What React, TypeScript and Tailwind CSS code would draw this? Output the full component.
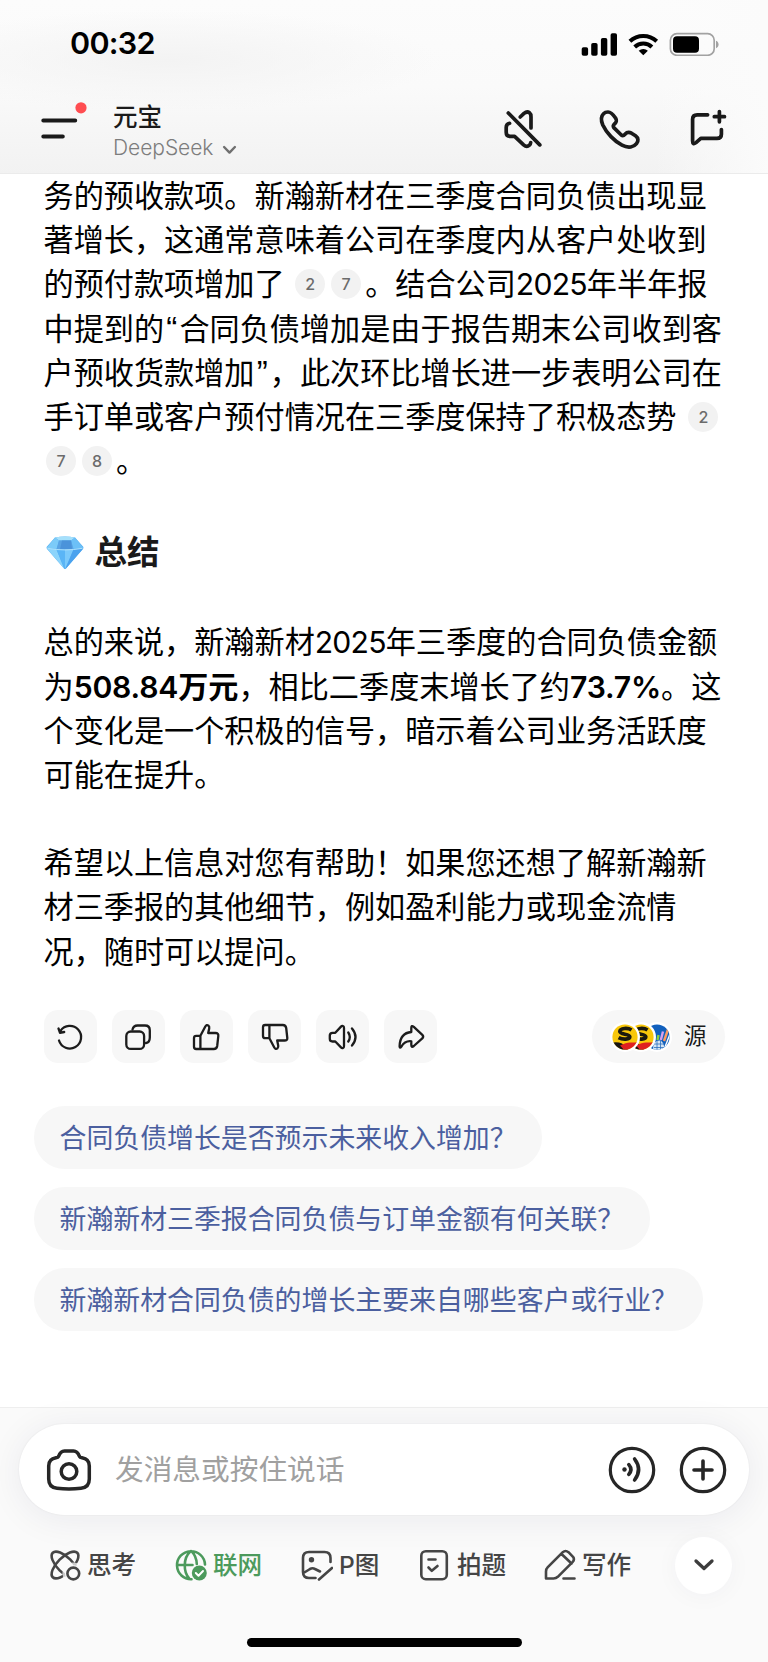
import React from "react";

const FONT = "font-['Inter','Noto_Sans_CJK_SC',sans-serif]";

function Line({ children }: { children: React.ReactNode }) {
  return <div className="h-[44.2px] leading-[44.2px] whitespace-nowrap">{children}</div>;
}

function Num({ children }: { children: React.ReactNode }) {
  return <span className="tracking-[-0.8px]">{children}</span>;
}

function Strong({ children }: { children: React.ReactNode }) {
  return <b className="font-semibold tracking-[-0.2px]">{children}</b>;
}

function Quote({ children }: { children: React.ReactNode }) {
  return (
    <span className="inline-block w-[15.3px] text-center font-['Liberation_Sans',sans-serif] text-[33px] leading-none">{children}</span>
  );
}

function Cite({ n, className = "" }: { n: number; className?: string }) {
  return (
    <span
      className={`inline-flex h-[30px] w-[30px] items-center justify-center rounded-full bg-[#f2f2f2] align-[5px] text-[16px] leading-none font-medium tracking-normal text-[#6b6b6b] ${className}`}
    >
      {n}
    </span>
  );
}

function StatusBar() {
  return (
    <div className="flex h-[86px] items-center justify-between pr-[49px] pl-[70px]">
      <span className="text-[30.5px] leading-none font-semibold tracking-[-0.7px] text-black">00:32</span>
      <svg width="138" height="24" viewBox="581 31 138 24" className="mt-[1px]">
        <g fill="#000">
          <rect x="581.7" y="46.3" width="6.4" height="8.4" rx="1.8" />
          <rect x="591.2" y="42" width="6.4" height="12.7" rx="1.8" />
          <rect x="600.9" y="37" width="6.4" height="17.7" rx="1.8" />
          <rect x="610.6" y="32.3" width="6.4" height="22.4" rx="1.8" />
          <path d="M643.3 54.3l-4.6-4.6a6.8 6.8 0 0 1 9.2 0z" />
        </g>
        <g fill="none" stroke="#000" strokeWidth="4">
          <path d="M634.7 46a12.4 12.4 0 0 1 17.2 0" />
          <path d="M629.9 40.2a19.6 19.6 0 0 1 26.8 0" />
        </g>
        <rect x="670.4" y="32.7" width="43.8" height="21.6" rx="6.6" fill="none" stroke="#a2a2a2" strokeWidth="1.7" />
        <rect x="673" y="35.3" width="26" height="16.4" rx="4" fill="#000" />
        <path d="M716 39.8c3.4 1.2 3.4 6.2 0 7.4z" fill="#a2a2a2" />
      </svg>
    </div>
  );
}

function NavBar() {
  return (
    <div className="flex h-[88px] items-start">
      <svg width="113" height="64" viewBox="0 86 113 64" fill="none" strokeLinecap="round">
        <path d="M43.3 120.4H75.2M43.3 136.5H62.8" stroke="#1a1a1a" strokeWidth="4" />
        <circle cx="81" cy="107.8" r="5.6" fill="#ff4d51" />
      </svg>
      <div className="flex flex-col">
        <div className="mt-[15px] h-[33px] text-[24.5px] leading-[33px] font-medium text-[#1a1a1a]">元宝</div>
        <div className="mt-[1px] flex h-[26px] items-center text-[21px] leading-[26px] font-light text-[#7d7d7d]">
          <span className="tracking-[-0.05px]">DeepSeek</span>
          <svg width="15" height="10" viewBox="0 0 14 10" className="mt-[3px] ml-[9px]" fill="none" stroke="#6f6f6f" strokeWidth="2.4" strokeLinecap="round" strokeLinejoin="round">
            <path d="M1.600 2l5.400 5.600L12.400 2" />
          </svg>
        </div>
      </div>
      <svg width="230" height="50" viewBox="500 104 230 50" className="mt-[18px] mr-[38px] ml-auto" fill="none" stroke="#1a1a1a" strokeWidth="3.7" strokeLinecap="round" strokeLinejoin="round">
        <path d="M508.300 113L539.800 144.900" />
        <path d="M520.200 117L524 113.400Q527 111 529.500 112.700Q531 113.800 531 117V128" />
        <path d="M509.600 123.300Q506.200 124 506.200 127.600V132.200Q506.200 136.300 510.200 136.300H514.600L523.600 144.900Q526.800 147.600 529.400 145.200Q530.600 144 530.700 142.500" />
        <path d="M608 112C611.500 112 613.500 115 615.500 118C617 120.500 616.800 121.500 615 123.500C613 125.300 612.600 126 613.800 127.600L621.300 135C622.800 136.200 623.500 136 625 134.200C627 132 629 131.800 631.500 133.200L635.500 135.800C638.500 138 638.600 141 636.500 143.700C634 147 628.500 148.600 622 145.200C614.500 141.200 606.500 133 602.800 125C600.500 119.500 601.300 116 603.500 113.800C604.800 112.400 606.300 112 608 112Z" />
        <path d="M707.600 114.800H697.200Q692.600 114.800 692.600 119.200V141Q692.600 145.200 696 142.600L700.800 138.400H717Q721.400 138.400 721.400 134.200V129.600" />
        <path d="M719.400 111.600V121.800M714.300 116.700H724.500" />
      </svg>
    </div>
  );
}

function ActionButton({ children }: { children: React.ReactNode }) {
  return (
    <button className="flex h-[53.5px] w-[53.5px] items-center justify-center rounded-[14px] bg-[#f7f7f7]">
      <svg width="32" height="32" viewBox="0 0 32 32" fill="none" stroke="#1c1c1c" strokeWidth="2.3" strokeLinecap="round" strokeLinejoin="round">
        {children}
      </svg>
    </button>
  );
}

function SinaLogo() {
  return (
    <svg width="30" height="30" viewBox="0 0 30 30" className="shrink-0">
      <circle cx="15" cy="15" r="15" fill="#fff" />
      <clipPath id="coin">
        <circle cx="15" cy="15" r="12.600" />
      </clipPath>
      <g clipPath="url(#coin)">
        <rect width="30" height="30" fill="#f8c70a" />
        <path d="M0 21Q7 19.500 12 21.500L20 30H0z" fill="#171412" />
        <path d="M10 23.500Q17 20 21 20.500Q25 21 30 19V30H16z" fill="#df2020" />
        <path d="M21.500 8C18 5.600 10.200 6 9.800 9.400C9.600 12.800 19.800 11.600 19.800 14.800C19.800 17.800 12.500 17.800 8.600 15.600" fill="none" stroke="#1b1a0e" strokeWidth="3.700" />
      </g>
    </svg>
  );
}

function ChartLogo() {
  return (
    <svg width="30" height="30" viewBox="0 0 30 30" className="shrink-0">
      <circle cx="15" cy="15" r="15" fill="#fff" />
      <clipPath id="globe">
        <circle cx="15" cy="15" r="12.600" />
      </clipPath>
      <g clipPath="url(#globe)">
        <rect width="30" height="30" fill="#1160bd" />
        <path d="M11 28Q11 18 18 18.500Q23 20 22 30z" fill="#d6e5f5" />
        <path d="M12 22H22M12 25.500H22M15 19V29M18.500 19V29" stroke="#2b70bd" strokeWidth=".8" />
        <path d="M15.500 18L16.500 13" stroke="#8dd13c" strokeWidth="2.400" />
        <path d="M18.800 18L21 9.500" stroke="#d9a0ee" strokeWidth="2.400" />
        <path d="M22 19L26 7.500" stroke="#ff9a60" strokeWidth="2.400" />
        <path d="M23 25L28 12" stroke="#fff" strokeWidth="1.400" />
      </g>
    </svg>
  );
}

function Diamond() {
  return (
    <svg width="38" height="34" viewBox="0 0 38 34" className="shrink-0">
      <path d="M9 1.500Q19-.5 29 1.500L37 10.500Q38 12 36.500 13.500L20 32.500Q19 33.500 18 32.500L1.500 13.500Q0 12 1 10.500z" fill="#55aef2" />
      <path d="M9 1.500Q19-.5 29 1.500L25 4.500H13z" fill="#a5e0fb" />
      <path d="M9 1.500L13 4.500L10.500 13L.6 12z" fill="#7ccbf8" />
      <path d="M29 1.500L25 4.500L27.500 13L37.400 12z" fill="#6cc0f7" />
      <path d="M13 4.500H25L27.500 13.500H10.500z" fill="#5aa4e4" />
      <path d="M16 4.500H25L26 13.500H14z" fill="#4b93da" />
      <path d="M.8 12.500L10.500 13.500L18 32.500z" fill="#8cd4fb" />
      <path d="M10.500 13.500H19V33z" fill="#5ab5f6" />
      <path d="M19 13.500H27.500L19 33z" fill="#7ccaFb" />
      <path d="M27.500 13.500L37.200 12.500L19.500 33z" fill="#4ba2ee" />
      <path d="M1.500 12.300Q19 15.500 36.500 12.300" fill="none" stroke="#b8e6fd" strokeWidth=".9" />
    </svg>
  );
}

function Suggestion({ text, className }: { text: string; className: string }) {
  return (
    <button className={`flex h-[63px] items-center rounded-[31px] bg-[#f7f7f7] pt-[1px] pl-[25.5px] text-[26.9px] leading-none whitespace-nowrap text-[#4b5f9f] ${className}`}>
      <span>{text}</span>
    </button>
  );
}

function Chip({ label, icon, className = "" }: { label: string; icon: React.ReactNode; className?: string }) {
  return (
    <div className={`flex shrink-0 items-center text-[24.6px] leading-none font-medium whitespace-nowrap text-[#454545] ${className}`}>
      <svg width="32" height="32" viewBox="0 0 32 32" className="mr-[6px] shrink-0" fill="none" stroke="currentColor" strokeWidth="2.600" strokeLinecap="round" strokeLinejoin="round">
        {icon}
      </svg>
      <span>{label}</span>
    </div>
  );
}

export default function App() {
  return (
    <div className={`flex h-[1662px] w-[768px] flex-col overflow-hidden bg-white text-black ${FONT}`}>
      <header className="z-10 h-[174px] shrink-0 border-b border-[#ebebeb] bg-[#fafafa] bg-[radial-gradient(ellipse_at_22%_35%,#f3f3f3_0%,#f3f3f300_32%),linear-gradient(90deg,#fafafa00_85%,#fbfbfb_100%),linear-gradient(180deg,#fcfcfc_0%,#fafafa_50%,#f2f2f2_100%)]">
        <StatusBar />
        <NavBar />
      </header>

      <main className="flex min-h-0 flex-1 flex-col bg-white">
        <div className="pl-[43.5px] text-[30.15px]">
          <Line>务的预收款项。新瀚新材在三季度合同负债出现显</Line>
          <Line>著增长，这通常意味着公司在季度内从客户处收到</Line>
          <Line>
            的预付款项增加了
            <Cite n={2} className="ml-[10.5px]" />
            <Cite n={7} className="mr-[4px] ml-[6px]" />
            。结合公司<Num>2025</Num>年半年报
          </Line>
          <Line>中提到的<Quote>“</Quote>合同负债增加是由于报告期末公司收到客</Line>
          <Line>户预收货款增加<Quote>”</Quote>，此次环比增长进一步表明公司在</Line>
          <Line>
            手订单或客户预付情况在三季度保持了积极态势
            <Cite n={2} className="ml-[12px]" />
          </Line>
          <Line>
            <Cite n={7} className="ml-[2.5px]" />
            <Cite n={8} className="mr-[4px] ml-[6px]" />。
          </Line>
        </div>

        <h2 className="mt-[46px] flex h-[48px] items-center pl-[46px] text-[32.5px] leading-none font-bold text-[#1a1a1a]">
          <Diamond />
          <span className="ml-[10.5px]">总结</span>
        </h2>

        <div className="mt-[43px] pl-[43.5px] text-[30.15px]">
          <Line>总的来说，新瀚新材<Num>2025</Num>年三季度的合同负债金额</Line>
          <Line>
            为<Strong>508.84</Strong><b className="font-semibold">万元</b>，相比二季度末增长了约<Strong>73.7%</Strong>。这
          </Line>
          <Line>个变化是一个积极的信号，暗示着公司业务活跃度</Line>
          <Line>可能在提升。</Line>
        </div>

        <div className="mt-[44.2px] pl-[43.5px] text-[30.15px]">
          <Line>希望以上信息对您有帮助！如果您还想了解新瀚新</Line>
          <Line>材三季报的其他细节，例如盈利能力或现金流情</Line>
          <Line>况，随时可以提问。</Line>
        </div>

        <div className="mt-[36px] flex h-[53.5px] items-center justify-between pr-[43px] pl-[43.5px]">
          <div className="flex gap-[14.6px]">
            <ActionButton>
              <path d="M5 19.500A11.300 11.300 0 1 0 6.500 9.800M4.500 7.500L6 11.800L10.200 11" />
            </ActionButton>
            <ActionButton>
              <rect x="4.300" y="10.500" width="17.800" height="17.400" rx="4.500" />
              <path d="M10.500 8.500Q11.500 4.500 15.500 4.500H23Q27.800 4.500 27.800 9.300V16.500Q27.800 21.500 24 22" />
            </ActionButton>
            <ActionButton>
              <path d="M10.400 14.800V28H6.200Q4 28 4 25.800V17Q4 14.800 6.200 14.800H10.400L15.300 5.500Q16.600 3.300 18.400 4.600Q19.600 5.700 19.200 7.500L18.200 12H25.500Q28.600 12 28.300 15L27.200 25Q26.700 28 23.800 28H10.400" />
            </ActionButton>
            <ActionButton>
              <path d="M10.400 17.200V4H6.200Q4 4 4 6.200V15Q4 17.200 6.200 17.200H10.400L15.300 26.500Q16.600 28.700 18.400 27.400Q19.600 26.300 19.200 24.500L18.200 19.500H25.500Q28.600 19.500 28.300 17L27.200 7Q26.700 4 23.800 4H10.400" />
            </ActionButton>
            <ActionButton>
              <path d="M2.800 14.500Q2.800 11.800 5.500 11.800H8.300L14 5.600Q15 4.500 16 5Q17 5.400 17 7V25Q17 26.600 16 27Q15 27.500 14 26.400L8.300 20.500H5.500Q2.800 20.500 2.800 17.800zM21.300 11.500Q24.300 16 21.300 20.500M25 7.500Q32 16 25 24.500" />
            </ActionButton>
            <ActionButton>
              <path d="M16.300 11V7Q16.300 3.800 18.800 5.800L27.300 13.800Q29 15.600 27.300 17.400L18.800 25Q16.300 27 16.300 23.800V20.300Q10 19.500 6.200 25.800Q4.800 27.800 4.600 25.300Q5 12 16.300 11z" />
            </ActionButton>
          </div>
          <div className="flex h-[53.5px] w-[133px] items-center rounded-full bg-[#f7f7f7] pl-[18px]">
            <div className="z-30"><SinaLogo /></div>
            <div className="z-20 -ml-[14px]"><SinaLogo /></div>
            <div className="z-10 -ml-[14px]"><ChartLogo /></div>
            <span className="ml-[12px] text-[22.5px] leading-none text-[#1a1a1a]">源</span>
          </div>
        </div>

        <div className="mt-[43px] flex flex-col items-start gap-[18px] pl-[34px]">
          <Suggestion className="w-[508px]" text="合同负债增长是否预示未来收入增加？" />
          <Suggestion className="w-[616px]" text="新瀚新材三季报合同负债与订单金额有何关联？" />
          <Suggestion className="w-[669px]" text="新瀚新材合同负债的增长主要来自哪些客户或行业？" />
        </div>
      </main>

      <footer className="flex h-[255px] shrink-0 flex-col border-t border-[#eeeeee] bg-[#fafafa]">
        <div className="mx-[19px] mt-[16px] flex h-[91px] shrink-0 items-center rounded-[46px] bg-white pr-[22px] pl-[27px] shadow-[0_4px_36px_#20204012,0_0_2px_#00000012]">
          <svg width="46" height="42" viewBox="0 0 46 42" fill="none" stroke="#262626" strokeWidth="3.500" strokeLinejoin="round">
            <path d="M12.500 7.500Q14.500 2 18.500 2H27.500Q31.500 2 33.500 7.500Q34 8.500 36 8.800Q43.300 10 43.300 17V30Q43.300 38.500 35 39.300Q23 40.500 11 39.300Q2.700 38.500 2.700 30V17Q2.700 10 10 8.800Q12 8.500 12.500 7.500z" />
            <circle cx="23" cy="22.500" r="7.800" />
          </svg>
          <span className="ml-[23px] pt-[1px] text-[28.7px] leading-none whitespace-nowrap text-[#a0a0a0]">发消息或按住说话</span>
          <svg width="48" height="48" viewBox="0 0 48 48" className="ml-auto" fill="none" stroke="#262626" strokeWidth="3.200" strokeLinecap="round">
            <circle cx="24" cy="24" r="21.700" />
            <circle cx="16.500" cy="23.500" r="2.200" fill="#262626" stroke="none" />
            <path d="M20.800 18.600Q25 23.500 20.800 28.400M26.600 13Q34.600 23.500 26.600 34" strokeWidth="3.600" />
          </svg>
          <svg width="48" height="48" viewBox="0 0 48 48" className="ml-[23.500px]" fill="none" stroke="#262626" strokeWidth="3.200" strokeLinecap="round">
            <circle cx="24" cy="24" r="21.700" />
            <path d="M24 15V33M15 24H33" strokeWidth="3.600" />
          </svg>
        </div>

        <div className="mt-[21px] flex h-[58px] shrink-0 items-center pl-[49px]">
          <Chip
            className="w-[126px]"
            label="思考"
            icon={
              <>
                <mask id="orbit">
                  <rect x="-4" y="-4" width="40" height="40" fill="#fff" />
                  <circle cx="24.300" cy="24.500" r="9.600" fill="#000" />
                </mask>
                <g mask="url(#orbit)">
                  <ellipse cx="16" cy="16" rx="17.300" ry="7.600" transform="rotate(45 16 16)" />
                  <ellipse cx="16" cy="16" rx="17.300" ry="7.600" transform="rotate(-45 16 16)" />
                </g>
                <circle cx="24.300" cy="24.500" r="5.900" />
              </>
            }
          />
          <Chip
            className="w-[126px] text-[#4c9a5c]!"
            label="联网"
            icon={
              <>
                <path d="M16.500 30.200A14 14 0 1 1 30 15.500M2.500 16H17.500M15.500 2.200C8 9 8 23 14.500 30M16.500 2.200Q21.500 7.500 21.800 15" />
                <circle cx="24.300" cy="24" r="7.500" fill="currentColor" stroke="none" />
                <path d="M20.800 24L23.500 26.700L28 22" stroke="#fff" strokeWidth="2" />
              </>
            }
          />
          <Chip
            className="w-[118px]"
            label="P图"
            icon={
              <>
                <path d="M14.500 29H8Q2 29 2 23V9Q2 3 8 3H23.500Q29.500 3 29.500 9V13M2.500 24L9 20Q11.500 18.600 14 20L19 22.500M18 30.500L31 19" />
                <circle cx="10.500" cy="10.800" r="2.700" fill="currentColor" stroke="none" />
              </>
            }
          />
          <Chip
            className="w-[125px]"
            label="拍题"
            icon={
              <>
                <rect x="2.300" y="2.200" width="25.500" height="28" rx="4.500" />
                <path d="M9.500 10.500H16.500M9.500 18.500L12.800 21.800L18.500 17" />
              </>
            }
          />
          <Chip
            label="写作"
            icon={
              <>
                <path d="M2 29.500V22.500Q2 20 3.800 18.200L18.800 3.200Q21.500 .8 24.500 3.200L29 7.800Q31 10.500 28.500 13.200L13.800 27.800Q12 29.500 9.500 29.500zM17.500 5L27.500 14.500M19.500 29.500H30.500" />
              </>
            }
          />
          <div className="mr-[36px] ml-auto flex h-[57px] w-[57px] items-center justify-center rounded-full bg-white shadow-[0_2px_24px_#2020400a]">
            <svg width="22" height="14" viewBox="0 0 22 14" fill="none" stroke="#3c3c3c" strokeWidth="3.300" strokeLinecap="round" strokeLinejoin="round">
              <path d="M3 3L11 10.500L19 3" />
            </svg>
          </div>
        </div>

        <div className="mt-[44px] ml-[247px] h-[9px] w-[275px] shrink-0 rounded-full bg-black" />
      </footer>
    </div>
  );
}
